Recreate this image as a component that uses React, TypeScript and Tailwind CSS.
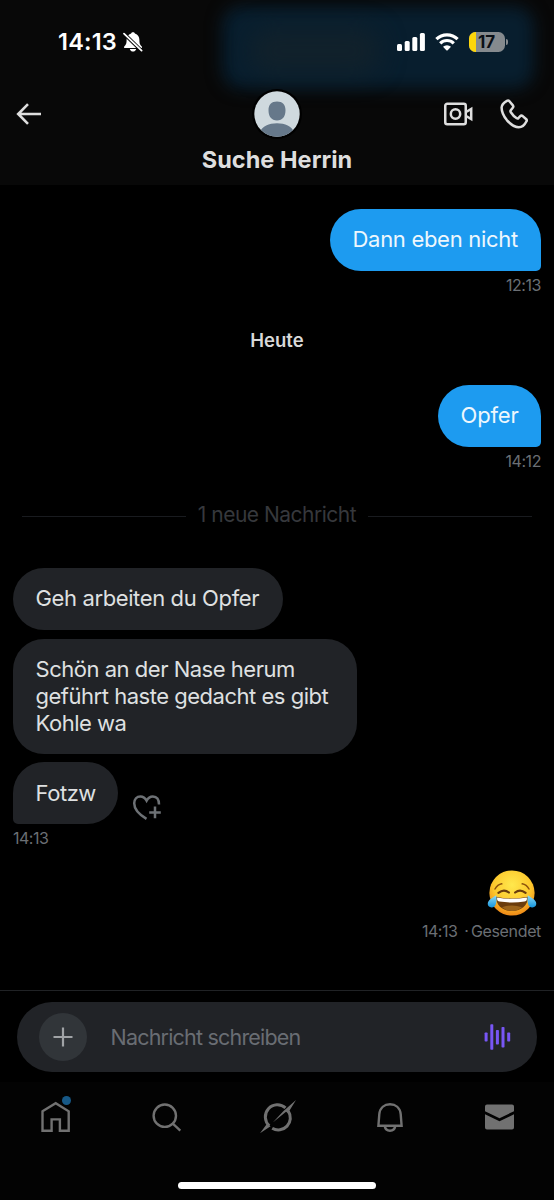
import React from 'react';

const icon = { fill: 'none', stroke: 'currentColor' } as const;

function StatusBar() {
  return (
    <div className="relative flex h-[83px] items-center justify-between pl-[58px] pr-[46px] text-white">
      <div className="flex items-center gap-[5px]">
        <span className="w-[60px] whitespace-nowrap text-[23.500px] font-semibold leading-7 tracking-[0.2px]">14:13</span>
        <svg className="h-[20px] w-[20px]" viewBox="0 0 20 20">
          <path fill="currentColor" d="M10 .3c-1 0-1.600.5-1.900 1.300C5 2.600 3.600 5 3.600 8c0 3.800-.7 4.700-2.200 6.200-.8.900-.4 1.800.7 1.800h15.800c1.100 0 1.500-.9.700-1.800-1.500-1.500-2.200-2.400-2.200-6.200 0-3-1.400-5.400-4.500-6.400C11.600.8 11 .3 10 .3zM6.800 17c.3 1.500 1.600 2.600 3.200 2.600s2.900-1.100 3.200-2.600z" />
          <path d="M.6 1.400 19 19.200" stroke="#080808" strokeWidth="3.600" />
          <path d="M1 1.600 18.600 18.600" stroke="currentColor" strokeWidth="1.800" strokeLinecap="round" />
        </svg>
      </div>
      <div className="flex items-center gap-[10px]">
        <svg className="h-[18px] w-[28px]" viewBox="0 0 28 18" fill="currentColor">
          <rect x="0" y="11" width="5" height="7" rx="1.500" />
          <rect x="7.700" y="8" width="5" height="10" rx="1.500" />
          <rect x="15.300" y="4" width="5" height="14" rx="1.500" />
          <rect x="22.900" y="0" width="5" height="18" rx="1.500" />
        </svg>
        <svg className="h-[18px] w-[24px]" viewBox="0 0 24 18" {...icon}>
          <path d="M1.400 6.200a15 15 0 0 1 21.200 0" strokeWidth="3.200" />
          <path d="M5.200 10.300a9.700 9.700 0 0 1 13.600 0" strokeWidth="3.200" />
          <path d="M8 13.800a5.700 5.700 0 0 1 8 0l-3.300 3.400q-.7.600-1.400 0z" fill="currentColor" stroke="none" />
        </svg>
        <div className="flex items-center gap-px">
          <div className="relative flex h-[20px] w-[36px] items-center justify-center overflow-hidden rounded-[6.500px] bg-[#858a8e]">
            <div className="absolute inset-y-0 left-0 w-[7px] bg-[#fdd60a]" />
            <span className="relative ml-[-1px] text-[17px] font-bold leading-[20px] tracking-[-0.2px] text-[#0b1016]">17</span>
          </div>
          <div className="h-[6px] w-[2px] rounded-r-full bg-[#858a8e]" />
        </div>
      </div>
    </div>
  );
}

function Header() {
  return (
    <header className="relative h-[185px] shrink-0 overflow-hidden bg-[#080808] text-[#dedede]">
      <div className="absolute left-[222px] top-[6px] h-[83px] w-[312px] rounded-[20px] bg-[#081e2e] blur-[8px]" />
      <div className="absolute left-[250px] top-[28px] h-[46px] w-[130px] rounded-[20px] bg-[#11212b] blur-[12px]" />
      <StatusBar />
      <div className="relative grid h-[62px] grid-cols-[1fr_50px_1fr] items-center">
        <svg className="ml-[16px] h-[22px] w-[26px]" viewBox="0 0 26 22" {...icon} strokeWidth="2.600">
          <path d="M25 11H2.500M12 1.200 2.200 11l9.800 9.800" />
        </svg>
        <svg className="h-[50px] w-[50px]" viewBox="0 0 50 50">
          <circle cx="25" cy="25" r="25" fill="#000" />
          <clipPath id="face"><circle cx="25" cy="25" r="22.700" /></clipPath>
          <g clipPath="url(#face)">
            <rect width="50" height="50" fill="#cfd9de" />
            <path fill="#66788a" d="M25 12.600c5.500 0 8.500 3.500 8.500 8.400 0 3.300-.6 5.600-2 7.500-1.600 2.100-3.800 2.900-6.500 2.900s-4.900-.8-6.500-2.900c-1.400-1.900-2-4.200-2-7.500 0-4.900 3-8.400 8.500-8.400zM8 49V43c2-6 9-8.800 17-8.800S40 37 42 43v6z" />
          </g>
        </svg>
        <div className="flex items-center justify-end gap-[27px] pr-[26px]">
          <svg className="h-[24px] w-[29px]" viewBox="0 0 29 24" {...icon} strokeWidth="2.500">
            <rect x="1.250" y="1.750" width="20.500" height="20.500" rx="2" />
            <circle cx="11.500" cy="12" r="4.700" />
            <path d="m22.500 9.800 4.700-2.900v10.200l-4.700-2.900" />
          </svg>
          <svg className="h-[30px] w-[28px]" viewBox="0 0 28 30" {...icon} strokeWidth="2.500" strokeLinejoin="round">
            <path d="M6.900 1.800Q8.300 1 9.400 2.200l3.500 4.200q.9 1.200-.1 2.300l-2 2.500q-.7 1 0 2 2.600 4 5.900 6 1 .6 1.800-.2l1.500-1.700q1.300-1.300 2.700-.2l3.300 2.900q1.400 1.300.2 2.700-2.700 5.500-7.400 5.500Q13 28 7 21.300 1.600 14.800 1.600 8.500 1.800 4.700 6.900 1.800z" />
          </svg>
        </div>
      </div>
      <h1 className="relative mt-px text-center text-[23.500px] font-bold leading-7 tracking-[0.040px]">Suche Herrin</h1>
    </header>
  );
}

const bubble = 'flex items-center px-[22.500px] text-[22px] leading-[27.300px] whitespace-nowrap';
const stamp = 'text-[16px] leading-5 text-[#6b6f74]';

function Sent({ text, size, time }: { text: string; size: string; time: string }) {
  return (
    <div className="flex flex-col items-end">
      <div className={`${bubble} ${size} h-[62px] rounded-[31px] rounded-br-[5px] bg-[#1d9bf0] text-[#eef7fd]`}>{text}</div>
      <div className={`${stamp} mt-[4px] tracking-[-0.45px]`}>{time}</div>
    </div>
  );
}

function Joy() {
  return (
    <svg className="h-[46px] w-[50px]" viewBox="0 0 50 46">
      <defs>
        <radialGradient id="skin" cx=".5" cy=".32" r=".68">
          <stop offset="0" stopColor="#ffe84d" />
          <stop offset=".6" stopColor="#fdc92d" />
          <stop offset="1" stopColor="#ee8817" />
        </radialGradient>
        <linearGradient id="tear" x1="0" y1="0" x2="0" y2="1">
          <stop offset="0" stopColor="#8edcf9" />
          <stop offset="1" stopColor="#1595dc" />
        </linearGradient>
      </defs>
      <circle cx="25" cy="23" r="22.600" fill="url(#skin)" />
      <path d="M8 19q2.500-4.400 6.800-5.200M35.200 13.800q4.300.8 6.800 5.200" fill="none" stroke="#8c520c" strokeWidth="1.500" strokeLinecap="round" />
      <path d="M11.400 22.800q5.500-4.400 10.500-.3M28.100 22.500q5-4.100 10.500.3" fill="none" stroke="#693c0d" strokeWidth="2.200" strokeLinecap="round" />
      <path d="M9 26.800q16 3.300 32 0C41 35.800 34 41 25 41S9 35.800 9 26.800z" fill="#6b3d0d" />
      <path d="M15 37.300q10-3.600 20 0Q31 41 25 41t-10-3.700z" fill="#9b641c" />
      <path d="M10.200 27.400q14.800 2.800 29.600 0c.6 2.900-.7 4-2.300 4.200q-12.500 1.800-25 0c-1.600-.2-2.900-1.300-2.300-4.200z" fill="#fff" />
      <path d="M9.200 25.300c.9 5.300.1 11.900-4.300 12.100C1 37.600-.2 34 1.500 31.200c1.500-2.500 4.700-3.600 7.700-5.900zM40.800 25.300c-.9 5.300-.1 11.900 4.300 12.100 3.900.2 5.100-3.400 3.400-6.200-1.500-2.500-4.700-3.600-7.700-5.900z" fill="url(#tear)" />
    </svg>
  );
}

function Conversation() {
  return (
    <main className="flex h-[805px] shrink-0 flex-col px-[13px] pt-[24px]">
      <Sent text="Dann eben nicht" size="w-[211px] tracking-[-0.3px]" time="12:13" />
      <div className="mt-[33px] h-[24px] text-center text-[18.500px] font-semibold leading-[24px] text-[#d9d9d9]">Heute</div>
      <div className="mt-[33px]"><Sent text="Opfer" size="w-[103px] tracking-[-0.15px]" time="14:12" /></div>
      <div className="mt-[30px] flex h-[28px] items-center px-[9px] text-[21px] leading-7 text-[#36383c]">
        <div className="mt-[3px] h-px flex-1 bg-[#191b1f]" />
        <span className="w-[182px] text-center whitespace-nowrap tracking-[-0.5px]">1 neue Nachricht</span>
        <div className="mt-[3px] h-px flex-1 bg-[#191b1f]" />
      </div>
      <div className="mt-[39px] flex flex-col items-start gap-[8.500px] text-[#dfe0e1]">
        <div className={`${bubble} h-[62px] w-[270px] rounded-[31px] bg-[#212327] tracking-[-0.38px]`}>Geh arbeiten du Opfer</div>
        <div className={`${bubble} h-[115px] w-[344px] rounded-[31px] bg-[#212327] pt-px tracking-[-0.48px]`}>
          <p>Schön an der Nase herum<br />geführt haste gedacht es gibt<br />Kohle wa</p>
        </div>
        <div className="flex items-end gap-[14px]">
          <div className={`${bubble} h-[62px] w-[105px] rounded-[31px] rounded-bl-[5px] bg-[#212327] pt-px tracking-[-0.45px]`}>Fotzw</div>
          <svg className="mb-[3px] h-[27px] w-[30px] text-[#6d7175]" viewBox="0 0 30 27" {...icon} strokeWidth="2.500">
            <path d="M14.500 24.800C7 20.500 2.200 14.800 2.200 9.300c0-4.200 2.600-6.900 6.200-6.900 2.900 0 4.900 1.700 6.200 4.200 1.300-2.500 3.400-4.200 6.300-4.200 3.900 0 6.200 2.900 6.100 8.200M23 12.500v11.800M17.200 18.400h11.600" />
          </svg>
        </div>
      </div>
      <div className={`${stamp} mt-[4px] tracking-[-0.5px]`}>14:13</div>
      <div className="mt-[22px] flex flex-col items-end">
        <div className="mr-[4px]"><Joy /></div>
        <div className={`${stamp} mt-[5px] flex`}>
          <span className="mr-[7px] tracking-[-0.5px]">14:13</span>
          <span className="mr-[2px]">·</span>
          <span className="tracking-[-0.35px]">Gesendet</span>
        </div>
      </div>
    </main>
  );
}

function Composer() {
  return (
    <div className="h-[92px] shrink-0 border-t border-[#202225] px-[17px] pt-[11px]">
      <div className="flex h-[70px] items-center rounded-full bg-[#212327] pl-[22px] pr-[25px]">
        <div className="flex h-[48px] w-[48px] items-center justify-center rounded-full bg-[#313539] text-[#a0a3a6]">
          <svg className="h-[20px] w-[20px]" viewBox="0 0 20 20" {...icon} strokeWidth="2.200"><path d="M10 .5v19M.5 10h19" /></svg>
        </div>
        <span className="ml-[23.500px] flex-1 whitespace-nowrap text-[21.500px] tracking-[-0.8px] text-[#696d73]">Nachricht schreiben</span>
        <svg className="h-[28px] w-[28px] text-[#7856f5]" viewBox="0 0 28 28" fill="currentColor">
          <rect x=".6" y="9.500" width="3" height="9" rx=".8" />
          <rect x="6.300" y="1.300" width="3" height="25.500" rx=".8" />
          <rect x="11.900" y="7" width="3" height="14.500" rx=".8" />
          <rect x="17.500" y="4" width="3" height="20.500" rx=".8" />
          <rect x="23.200" y="9.500" width="3" height="9" rx=".8" />
        </svg>
      </div>
    </div>
  );
}

function TabBar() {
  return (
    <nav className="flex h-[118px] shrink-0 flex-col bg-[#030303] text-[#717171]">
      <div className="grid h-[70px] grid-cols-[112px_110px_112px_111px_109px] items-center justify-items-center">
        <div className="relative">
          <svg className="h-[32px] w-[32px]" viewBox="0 0 32 32" {...icon} strokeWidth="2.400">
            <path d="M2.500 10.300 15.700 2.200l13 8.100v19.400h-8.800V18.400h-8.300v11.300H2.500z" />
          </svg>
          <div className="absolute left-[22px] top-[-5px] h-[9px] w-[9px] rounded-full bg-[#175987]" />
        </div>
        <svg className="h-[32px] w-[32px]" viewBox="0 0 32 32" {...icon} strokeWidth="2.400">
          <circle cx="13.800" cy="14.700" r="11.200" />
          <path d="m21.800 22.700 7.500 7" />
        </svg>
        <svg className="h-[34px] w-[36px]" viewBox="0 0 36 34">
          <path d="M9.300 25.800A12 12 0 0 1 25.500 7.900M28.300 11.200A12 12 0 0 1 12.200 28.200" {...icon} strokeWidth="3" />
          <path fill="currentColor" d="M36 0 30 9.800 27.800 13 26 11.700 12.800 22.600 23.500 11zM0 33.300 6.800 24 10.600 26.200z" />
        </svg>
        <svg className="h-[32px] w-[30px]" viewBox="0 0 30 32" {...icon} strokeWidth="2.400">
          <path d="M4.300 13.200C4.900 6.800 9.400 3.200 15 3.200s10.100 3.600 10.700 10l.9 11.500H3.400zM9.700 25c.5 3 2.600 4.700 5.300 4.700s4.800-1.700 5.300-4.700" />
        </svg>
        <svg className="h-[28px] w-[31px]" viewBox="0 0 31 28" fill="currentColor">
          <path d="M1 8.200V3.500Q1 1.500 3 1.500h25q2 0 2 2v4.700l-14.500 7zM1 11.300l14.500 6.900L30 11.300v13.200q0 2-2 2H3q-2 0-2-2z" />
        </svg>
      </div>
      <div className="mx-auto mt-[29.500px] h-[7.500px] w-[198px] rounded-full bg-white" />
    </nav>
  );
}

export default function App() {
  return (
    <div className="flex h-[1200px] w-[554px] flex-col overflow-hidden bg-black font-['Inter','Liberation_Sans',sans-serif]">
      <Header />
      <Conversation />
      <Composer />
      <TabBar />
    </div>
  );
}
